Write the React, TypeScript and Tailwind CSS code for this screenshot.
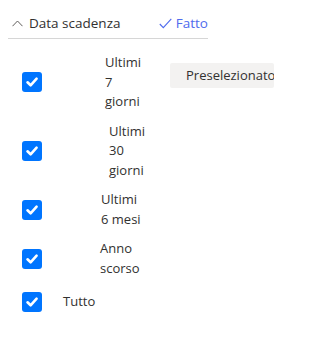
import { useState } from "react";

const OPTIONS = [
  { label: "Ultimi 7 giorni", lines: ["Ultimi", "7", "giorni"], pad: "pl-[63px]" },
  { label: "Ultimi 30 giorni", lines: ["Ultimi", "30", "giorni"], pad: "pl-[67px]" },
  { label: "Ultimi 6 mesi", lines: ["Ultimi", "6 mesi"], pad: "pl-[59px]" },
  { label: "Anno scorso", lines: ["Anno", "scorso"], pad: "pl-[58px]" },
  { label: "Tutto", lines: ["Tutto"], pad: "pl-[21px]" },
];

function Check({ on, onClick }: { on: boolean; onClick: () => void }) {
  return (
    <button
      onClick={onClick}
      className={
        "w-5 h-5 shrink-0 rounded-[3px] flex items-center justify-center " +
        (on ? "bg-[#0075ff]" : "border-2 border-[#767676] bg-white")
      }
    >
      {on && (
        <svg width="14" height="14" viewBox="0 0 14 14">
          <path d="M2.5 7.3 L5.6 10.3 L11.6 3.6" fill="none" stroke="white" strokeWidth="2.6" strokeLinecap="round" strokeLinejoin="round" />
        </svg>
      )}
    </button>
  );
}

export default function App() {
  const [checked, setChecked] = useState<boolean[]>([true, true, true, true, true]);

  return (
    <div className="w-[313px] h-[342px] bg-white text-[#323130] text-[13px] font-['Open_Sans','Noto_Sans',sans-serif] overflow-hidden">
      {/* header */}
      <div className="flex items-center w-[200px] ml-2 h-[31px] mt-[8px] border-b border-[#d6d6d6]">
        <button className="flex items-center gap-[6px] pl-[4px] text-[13.5px]">
          <svg width="11" height="7" viewBox="0 0 11 7">
            <path d="M0.5 6.2 L5.5 1 L10.5 6.2" fill="none" stroke="#605e5c" strokeWidth="1" />
          </svg>
          <span>Data scadenza</span>
        </button>
        <button className="flex items-center gap-[4px] ml-auto text-[#4f6bed] text-[13.5px]">
          <svg width="13" height="11" viewBox="0 0 13 11">
            <path d="M0.8 6 L4.3 9.6 L12.3 0.8" fill="none" stroke="#4f6bed" strokeWidth="1.1" />
          </svg>
          <span>Fatto</span>
        </button>
      </div>

      <div className="flex flex-col gap-[10px] mt-[14px] pl-[22px]">
        {OPTIONS.map((o, i) => (
          <div key={o.label} className="flex items-center relative min-h-[28px]">
            <Check
              on={checked[i]}
              onClick={() => setChecked((c) => c.map((v, j) => (j === i ? !v : v)))}
            />
            <div className={"flex flex-col leading-[19.5px] " + o.pad}>
              {o.lines.map((l) => (
                <span key={l}>{l}</span>
              ))}
            </div>
            {i === 0 && (
              <div className="absolute left-[148px] top-[10px] w-[104px] h-[25px] bg-[#f3f2f1] rounded-[2px] overflow-hidden whitespace-nowrap pl-4 leading-[25px]">
                Preselezionato
              </div>
            )}
          </div>
        ))}
      </div>
    </div>
  );
}
